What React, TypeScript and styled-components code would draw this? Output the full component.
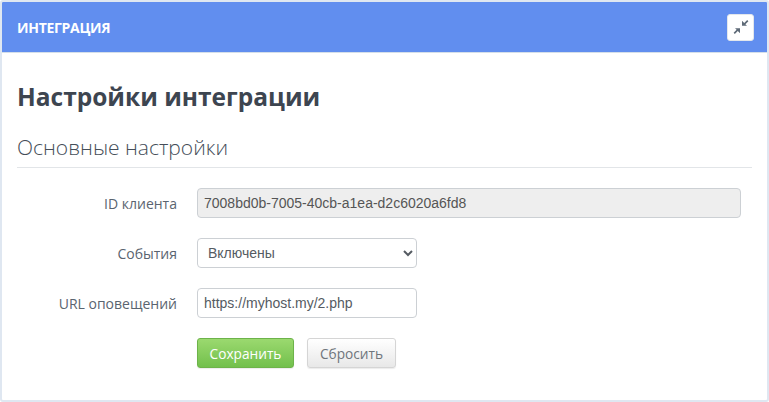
import React from 'react'
import styled, { createGlobalStyle } from 'styled-components'

const App = () => {
  return (
    <Panel>
      <GlobalStyle />
      <PanelHeader>
        <PanelTitle>Интеграция</PanelTitle>
        <CollapseButton aria-label="collapse">
          <svg width="16" height="16" viewBox="0 0 16 16" fill="#5f6b78">
            <path d="M14.2 1 15.4 2.2 12.4 5.2 14 6.8H9V1.8L11.2 4Z" />
            <path d="M1.8 15 .6 13.8 3.6 10.8 2 9.2H7V14.2L4.8 12Z" />
          </svg>
        </CollapseButton>
      </PanelHeader>
      <PanelBody>
        <PageTitle>Настройки интеграции</PageTitle>
        <SectionTitle>Основные настройки</SectionTitle>
        <Form>
          <FormRow>
            <Label>ID клиента</Label>
            <TextInput
              $wide
              disabled
              readOnly
              value="7008bd0b-7005-40cb-a1ea-d2c6020a6fd8"
            />
          </FormRow>
          <FormRow>
            <Label>События</Label>
            <Select defaultValue="on">
              <option value="on">Включены</option>
              <option value="off">Выключены</option>
            </Select>
          </FormRow>
          <FormRow>
            <Label>URL оповещений</Label>
            <TextInput readOnly value="https://myhost.my/2.php" />
          </FormRow>
          <Actions>
            <SaveButton>Сохранить</SaveButton>
            <ResetButton>Сбросить</ResetButton>
          </Actions>
        </Form>
      </PanelBody>
    </Panel>
  )
}

export default App

const GlobalStyle = createGlobalStyle`
  html, body {
    margin: 0;
    padding: 0;
    background: #fff;
  }
  * {
    box-sizing: border-box;
  }
`

const Panel = styled.div`
  width: 769px;
  height: 402px;
  overflow: hidden;
  background: #fff;
  border: 2px solid #dfe7f1;
  border-radius: 3px;
  font-family: 'Open Sans', sans-serif;
`

const PanelHeader = styled.div`
  height: 51px;
  padding: 0 13px 0 15px;
  background: #618eef;
  border-bottom: 1px solid #d5dfe9;
  display: flex;
  align-items: center;
  justify-content: space-between;
`

const PanelTitle = styled.div`
  color: #fff;
  font-size: 14px;
  font-weight: 700;
  letter-spacing: -0.3px;
  text-transform: uppercase;
`

const CollapseButton = styled.button`
  width: 27px;
  height: 27px;
  padding: 0;
  background: #fff;
  border: 1px solid #e3e7ec;
  border-radius: 3px;
  display: flex;
  align-items: center;
  justify-content: center;
`

const PanelBody = styled.div`
  padding: 27px 15px 0;
`

const PageTitle = styled.h1`
  margin: 0;
  color: #3d4550;
  font-size: 24.5px;
  line-height: 33px;
  font-weight: 700;
`

const SectionTitle = styled.h2`
  margin: 21px 0 0;
  height: 34px;
  color: #454e59;
  font-size: 21px;
  line-height: 27px;
  font-weight: 300;
  border-bottom: 1px solid #e2e5e8;
`

const Form = styled.form`
  padding-top: 20px;
  display: flex;
  flex-direction: column;
  gap: 20px;
`

const FormRow = styled.div`
  display: flex;
  align-items: center;
  gap: 20px;
`

const Label = styled.label`
  width: 160px;
  color: #5a6470;
  font-size: 14px;
  text-align: right;
`

const TextInput = styled.input<{ $wide?: boolean }>`
  width: ${(p) => (p.$wide ? '544px' : '220px')};
  height: 30px;
  padding: 0 6px;
  color: #555b62;
  font-family: 'Liberation Sans', Arial, sans-serif;
  font-size: 14px;
  background: #fff;
  border: 1px solid #ccd0d4;
  border-radius: 4px;
  outline: none;

  &:disabled {
    background: #eee;
    color: #555;
    opacity: 1;
  }
`

const Select = styled.select`
  width: 220px;
  height: 30px;
  padding: 0 6px;
  color: #555b62;
  font-family: 'Liberation Sans', Arial, sans-serif;
  font-size: 14px;
  background: #fff;
  border: 1px solid #ccd0d4;
  border-radius: 4px;
  outline: none;
`

const Actions = styled.div`
  padding-left: 180px;
  display: flex;
  gap: 13px;
`

const SaveButton = styled.button`
  width: 97px;
  height: 30px;
  padding: 0;
  color: #fff;
  font-family: 'Open Sans', sans-serif;
  font-size: 13.7px;
  background: linear-gradient(#9bd96f, #72c04c);
  border: 1px solid #6db34a;
  border-radius: 3px;
  box-shadow: 0 1px 1px rgba(0, 0, 0, 0.08);
`

const ResetButton = styled.button`
  width: 89px;
  height: 30px;
  padding: 0;
  color: #6f757c;
  font-family: 'Open Sans', sans-serif;
  font-size: 13.7px;
  background: linear-gradient(#fff, #e8e8e8);
  border: 1px solid #d5d5d5;
  border-radius: 3px;
  box-shadow: 0 1px 1px rgba(0, 0, 0, 0.08);
`
